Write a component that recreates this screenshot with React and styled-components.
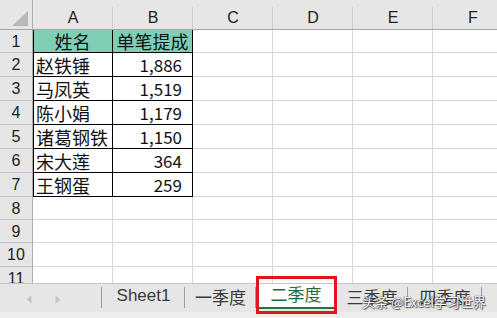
import React from "react";
import styled, { createGlobalStyle } from "styled-components";

const Global = createGlobalStyle`
  html, body { margin: 0; padding: 0; background: #fff; }
  body { font-family: "Noto Sans CJK SC", "Liberation Sans", sans-serif; }
`;

const Frame = styled.div`
  position: relative;
  width: 497px;
  height: 318px;
  overflow: hidden;
  display: flex;
  flex-direction: column;
  background: #fff;
`;

const Sheet = styled.div`
  height: 283px;
  overflow: hidden;
  display: grid;
  grid-template-columns: 33px repeat(6, 80px);
  grid-template-rows: 30px 23px 24px 24px 24px 24px 24px 24px 23px 23px 24px 24px;
  flex: none;
`;

const HeadBase = styled.div`
  position: relative;
  background: #e6e6e6;
  color: #222;
  font-family: "Liberation Sans", "Noto Sans CJK SC", sans-serif;
  font-size: 16px;
  line-height: 18px;
  display: flex;
  align-items: center;
  justify-content: center;
  box-sizing: border-box;
`;

const Corner = styled(HeadBase)`
  border-right: 1px solid #acacac;
  border-bottom: 1px solid #a6a6a6;
  align-items: flex-end;
  justify-content: flex-end;
  padding: 0 3px 2px 0;
`;

const ColHead = styled(HeadBase)`
  border-bottom: 1px solid #a6a6a6;
  padding-top: 6px;
  &::after {
    content: "";
    position: absolute;
    right: 0;
    top: 7px;
    bottom: 0;
    width: 1px;
    background: #cacaca;
  }
`;

const RowHead = styled(HeadBase)`
  border-right: 1px solid #acacac;
  border-bottom: 1px solid #c4c4c4;
  padding-top: 1px;
`;

const Cell = styled.div`
  box-sizing: border-box;
  display: flex;
  align-items: center;
  justify-content: ${(p) => (p.$num ? "flex-end" : p.$center ? "center" : "flex-start")};
  padding: 0 ${(p) => (p.$num ? "10px" : "3px")} 0 3px;
  font-size: ${(p) => (p.$num ? "17px" : "18px")};
  line-height: 20px;
  color: #111;
  white-space: nowrap;
  overflow: hidden;
  background: ${(p) => (p.$teal ? "#7fcfb7" : "#fff")};
  border-right: 1px solid ${(p) => (p.$table ? "#000" : "#d6d6d6")};
  border-bottom: 1px solid ${(p) => (p.$table ? "#000" : "#d6d6d6")};
  box-shadow: ${(p) => (p.$lead ? "inset 1px 0 0 #000" : "none")};
`;

const TabBar = styled.div`
  flex: none;
  height: 29px;
  box-sizing: border-box;
  border-top: 1px solid #c6c6c6;
  background: #e6e6e6;
  display: flex;
  align-items: stretch;
`;

const BottomStrip = styled.div`
  flex: 1;
  background: #ededed;
`;

const Nav = styled.div`
  width: 102px;
  display: flex;
  align-items: center;
  padding-left: 26px;
  gap: 23px;
  box-sizing: border-box;
  border-right: 1px solid #9c9c9c;
  margin: 3px 0 4px;
  padding-top: 4px;
`;

const Tab = styled.div`
  width: ${(p) => p.$w}px;
  flex: none;
  box-sizing: border-box;
  display: flex;
  align-items: center;
  justify-content: center;
  font-size: 17px;
  padding-bottom: 4px;
  color: ${(p) => (p.$active ? "#1f6b3e" : "#3a3a3a")};
  background: ${(p) => (p.$active ? "#fff" : "transparent")};
  font-family: ${(p) => (p.$latin ? '"Liberation Sans", sans-serif' : '"Noto Sans CJK SC", sans-serif')};
  position: relative;
  ${(p) =>
    p.$active
      ? `border-bottom: 2px solid #217346; margin-bottom: 3px;`
      : `&::after { content: ""; position: absolute; right: 0; top: 3px; bottom: 4px; width: 1px; background: #9c9c9c; }`}
`;

const RedBox = styled.div`
  position: absolute;
  left: 256px;
  top: 276px;
  width: 81px;
  height: 38px;
  box-sizing: border-box;
  border: 3px solid #e3141d;
  pointer-events: none;
`;

const Watermark = styled.div`
  position: absolute;
  left: 362px;
  top: 295px;
  font-size: 13px;
  line-height: 14px;
  color: #fff;
  white-space: nowrap;
  font-family: "Noto Sans CJK SC", sans-serif;
  text-shadow: 0 0 1px #333, 0 0 1px #333, 1px 1px 1px rgba(0,0,0,0.6);
`;

const Arrow = ({ dir }) => (
  <svg width="6" height="9" viewBox="0 0 6 9">
    <path d={dir === "l" ? "M5.5 0.5 L0.5 4.5 L5.5 8.5 Z" : "M0.5 0.5 L5.5 4.5 L0.5 8.5 Z"} fill="#c4c4c4" />
  </svg>
);

const cols = ["A", "B", "C", "D", "E", "F"];
const data = [
  ["姓名", "单笔提成"],
  ["赵铁锤", "1,886"],
  ["马凤英", "1,519"],
  ["陈小娟", "1,179"],
  ["诸葛钢铁", "1,150"],
  ["宋大莲", "364"],
  ["王钢蛋", "259"],
];

export default function App() {
  const rows = [];
  for (let r = 1; r <= 11; r++) {
    const d = data[r - 1];
    rows.push(<RowHead key={`h${r}`}>{r}</RowHead>);
    cols.forEach((c, i) => {
      const inTable = d && i < 2;
      const head = r === 1 && inTable;
      rows.push(
        <Cell
          key={`${c}${r}`}
          $table={inTable}
          $lead={inTable && i === 0}
          $teal={head}
          $center={head}
          $num={inTable && !head && i === 1}
        >
          {inTable ? d[i] : ""}
        </Cell>
      );
    });
  }

  return (
    <>
      <Global />
      <Frame>
        <Sheet>
          <Corner>
            <svg width="17" height="16" viewBox="0 0 17 16">
              <path d="M16 0 L16 15 L0 15 Z" fill="#b8b8b8" />
            </svg>
          </Corner>
          {cols.map((c) => (
            <ColHead key={c}>{c}</ColHead>
          ))}
          {rows}
        </Sheet>
        <TabBar>
          <Nav>
            <Arrow dir="l" />
            <Arrow dir="r" />
          </Nav>
          <Tab $w={83} $latin>Sheet1</Tab>
          <Tab $w={71}>一季度</Tab>
          <Tab $w={80} $active>二季度</Tab>
          <Tab $w={72}>三季度</Tab>
          <Tab $w={74}>四季度</Tab>
        </TabBar>
        <BottomStrip />
        <RedBox />
        <Watermark>头条 @Excel学习世界</Watermark>
      </Frame>
    </>
  );
}
